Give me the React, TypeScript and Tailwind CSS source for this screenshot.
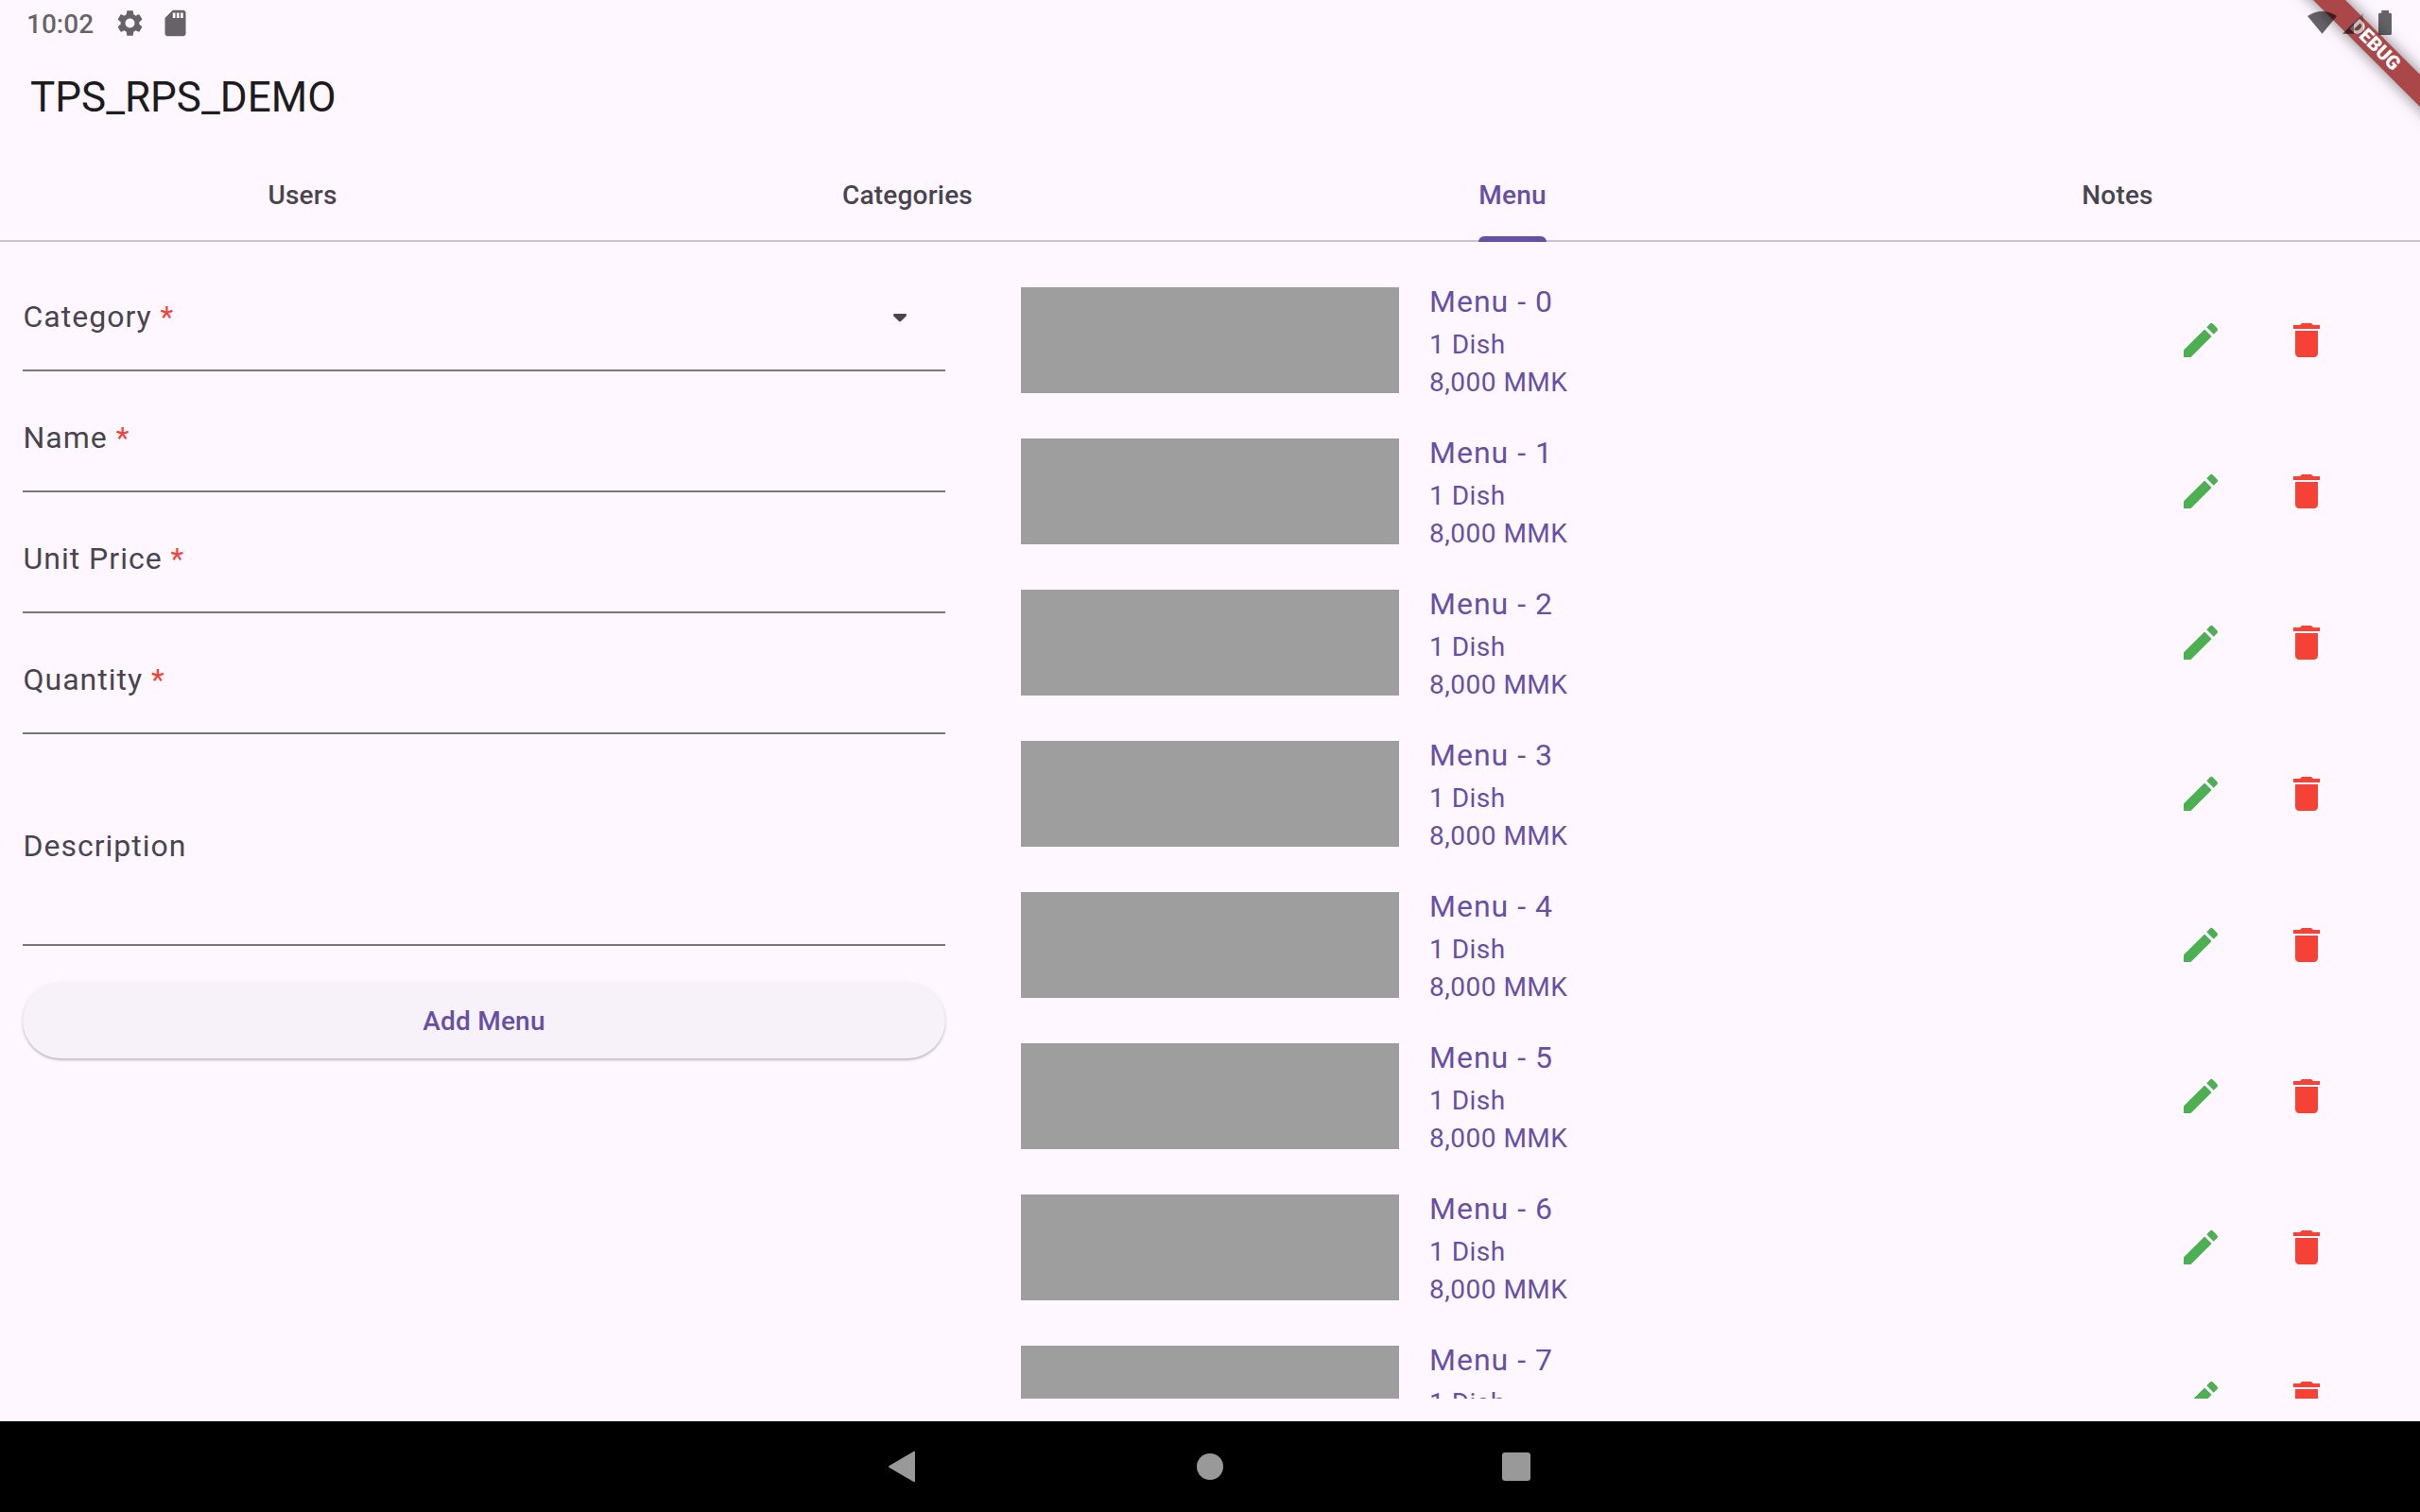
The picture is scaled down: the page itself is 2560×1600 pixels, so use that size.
import React from "react";
import { MdEdit, MdDelete, MdSettings, MdSdCard } from "react-icons/md";

const tabs = ["Users", "Categories", "Menu", "Notes"];
const fields = ["Category", "Name", "Unit Price", "Quantity"];
const items = [0, 1, 2, 3, 4, 5, 6, 7];

function StatusBar() {
  return (
    <div className="relative z-10 flex h-12 items-center justify-between pl-7 pr-[28px] text-black/60">
      <div className="flex h-12 items-center">
        <span className="w-[92.5px] pt-[3px] text-[28px] leading-8 font-medium">10:02</span>
        <MdSettings className="size-[33px]" />
        <MdSdCard className="ml-[15px] size-[33px]" />
      </div>
      <svg className="h-12 w-[92px]" viewBox="2440 0 92 48" fill="currentColor">
        <path d="M2441 17 Q2456.500 7 2472 17 L2456.500 35.700Z" />
        <path d="M2478 35.700 L2490 24 V35.700Z" />
        <path d="M2490 24 L2500 14 V35.700 H2490Z" opacity=".4" />
        <path d="M2519.300 11h7.700v2.700h1.500q1.500 0 1.500 1.500v20.300q0 1.500-1.500 1.500h-11q-1.500 0-1.500-1.500v-20.300q0-1.500 1.500-1.500h1.800z" />
      </svg>
    </div>
  );
}

function DebugBanner() {
  return (
    <div className="pointer-events-none absolute top-0 right-0 size-40 overflow-hidden">
      <div className="absolute top-[35.75px] left-[-27.75px] flex h-6 w-[280px] rotate-45 items-center justify-center bg-[#aa4749] pb-[1.5px] pl-px text-[20.4px] leading-none font-black text-white shadow-[0_0_16px_rgba(0,0,0,0.5)]">
        DEBUG
      </div>
    </div>
  );
}

function Tabs() {
  return (
    <div className="flex h-24 border-b-2 border-[#cac4d0]">
      {tabs.map((t) => (
        <div key={t} className="flex flex-1 justify-center">
          <div
            className={
              t === "Menu"
                ? "relative h-24 pt-[26px] text-[28px] leading-[41px] font-medium tracking-[0.2px] text-[#6750a4]"
                : "relative h-24 pt-[26px] text-[28px] leading-[41px] font-medium tracking-[0.2px] text-[#49454f]"
            }
          >
            {t}
            {t === "Menu" && <div className="absolute bottom-0 left-0 h-1.5 w-full rounded-t-md bg-[#6750a4]" />}
          </div>
        </div>
      ))}
    </div>
  );
}

function Form() {
  return (
    <div className="w-[976px] pt-[9px]">
      {fields.map((f) => (
        <div key={f} className="flex h-32 justify-between border-b-2 border-[#79747e] pt-[46px] text-[32px] leading-12 tracking-[1px] text-[#49454f]">
          <div className="pl-[0.5px] whitespace-pre">
            {f} <span className="text-[#f44336]">*</span>
          </div>
          {f === "Category" && (
            <svg className="mr-6 size-12" viewBox="0 0 48 48" fill="currentColor">
              <path d="M18.400 21h11.200q1.400 0 1.400 1.400 0 .6-.4 1l-5.600 5.700q-1 .8-2 0l-5.600-5.700q-.4-.4-.4-1 0-1.400 1.400-1.400z" />
            </svg>
          )}
        </div>
      ))}
      <div className="h-56 border-b-2 border-[#79747e] pt-[94px] pl-[0.5px] text-[32px] leading-12 tracking-[1px] text-[#49454f]">
        Description
      </div>
      <button className="mt-[39px] block h-20 w-full rounded-full bg-[#f7f2fa] pt-px text-[28px] font-medium tracking-[0.2px] text-[#6750a4] shadow-[0_2px_2px_rgba(0,0,0,0.18),0_1px_4px_rgba(0,0,0,0.1)]">
        Add Menu
      </button>
    </div>
  );
}

function MenuRow({ n }: { n: number }) {
  return (
    <div className="flex h-40 shrink-0 items-center">
      <div className="h-28 w-[400px] bg-[#9e9e9e]" />
      <div className="ml-8 flex-1 text-[28px] leading-[41px] tracking-[0.5px] text-[#6750a4]">
        <div className="-mt-px mb-px text-[32px] leading-12 tracking-[1px]">Menu - {n}</div>
        <div className="-mb-px">1 Dish</div>
        <div className="-mb-px">8,000 MMK</div>
      </div>
      <MdEdit className="size-12 text-[#4caf50]" />
      <MdDelete className="ml-16 size-12 text-[#f44336]" />
    </div>
  );
}

function NavBar() {
  return (
    <div className="flex h-24 items-center justify-center bg-black">
      <svg className="h-24 w-[704px]" viewBox="928 1504 704 96" fill="#999">
        <path d="M967.200 1536.500 V1567.500 L940.700 1552Z" stroke="#999" strokeWidth="1.500" strokeLinejoin="round" />
        <circle cx="1280" cy="1552" r="14" />
        <rect x="1589" y="1537" width="30" height="30" rx="3" />
      </svg>
    </div>
  );
}

export default function App() {
  return (
    <div className="relative flex h-[1600px] w-[2560px] flex-col overflow-hidden bg-[#fef7ff] font-[Roboto,sans-serif]">
      <StatusBar />
      <header className="flex h-28 items-center pb-[3px] pl-8 text-[44px] leading-none text-[#1d1b20]">TPS_RPS_DEMO</header>
      <Tabs />
      <main className="flex h-[1248px] justify-between px-6">
        <Form />
        <div className="mt-6 mr-[72px] mb-6 flex w-[1384px] flex-col overflow-hidden">
          {items.map((n) => (
            <MenuRow key={n} n={n} />
          ))}
        </div>
      </main>
      <NavBar />
      <DebugBanner />
    </div>
  );
}
